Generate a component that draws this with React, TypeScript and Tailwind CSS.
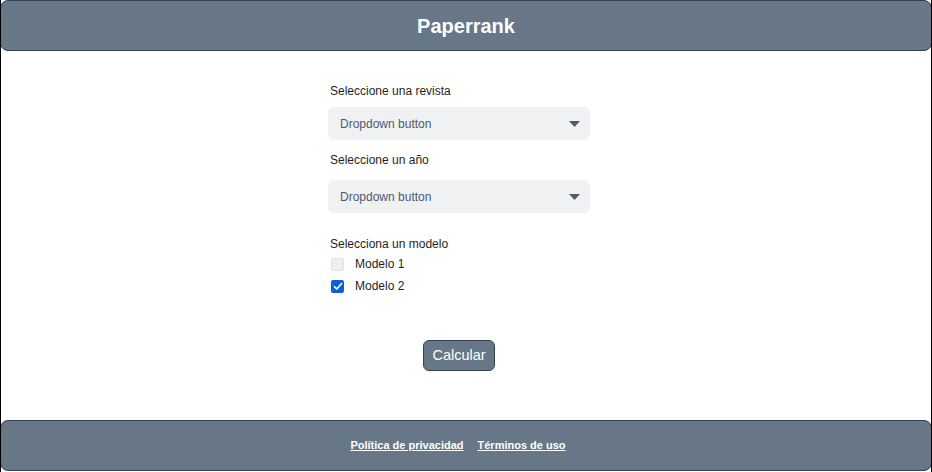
import { useState } from "react";

const MODELS = ["Modelo 1", "Modelo 2"];

function Dropdown({ label, gap }: { label: string; gap: string }) {
  return (
    <div className="flex flex-col">
      <span className="text-[12px] text-[#1f1f1f] px-[2px] h-[18px] leading-[18px]">{label}</span>
      <button className={`${gap} h-[33px] w-full rounded-md bg-[#f0f1f3] flex items-center justify-between pl-[12px] pr-[10px] text-[12px] text-[#4d5a70]`}>
        <span>Dropdown button</span>
        <svg width="11" height="6" viewBox="0 0 11 6" className="fill-[#4d5a70]">
          <path d="M0 0h11L5.5 6z" />
        </svg>
      </button>
    </div>
  );
}

export default function App() {
  const [checked, setChecked] = useState<Record<string, boolean>>({ "Modelo 2": true });

  return (
    <div
      className="h-[472px] w-[932px] flex flex-col bg-white border-x border-black overflow-hidden"
      style={{ fontFamily: '"Liberation Sans", Arial, sans-serif' }}
    >
      {/* Header */}
      <header className="-mx-px h-[51px] flex-shrink-0 flex items-center justify-center rounded-lg border border-[#334155] bg-[#677788]">
        <h1 className="text-[20px] font-bold text-white">Paperrank</h1>
      </header>

      {/* Form */}
      <main className="flex-1 flex flex-col items-center mr-[14px]">
        <div className="w-[262px] pt-[31px] flex flex-col">
          <Dropdown label="Seleccione una revista" gap="mt-[7px]" />
          <div className="h-[11px]" />
          <Dropdown label="Seleccione un año" gap="mt-[11px]" />

          <div className="mt-[22px] flex flex-col">
            <span className="text-[12px] text-[#1f1f1f] px-[2px] h-[18px] leading-[18px]">Selecciona un modelo</span>
            <div className="flex flex-col">
              {MODELS.map((m) => {
                const on = !!checked[m];
                return (
                  <label
                    key={m}
                    className="flex items-center h-[22px] cursor-pointer"
                    onClick={() => setChecked({ ...checked, [m]: !on })}
                  >
                    <span
                      className={`ml-[3px] w-[13px] h-[13px] rounded-[2px] flex items-center justify-center ${
                        on ? "bg-[#0b5fd8]" : "bg-[#eef0f3] border border-[#dde1e6]"
                      }`}
                    >
                      {on && (
                        <svg width="10" height="8" viewBox="0 0 10 8" fill="none">
                          <path d="M1 4.2L3.8 7 9 1" stroke="white" strokeWidth="1.6" />
                        </svg>
                      )}
                    </span>
                    <span className="ml-[11px] text-[12px] text-[#1f1f1f]">{m}</span>
                  </label>
                );
              })}
            </div>
          </div>
        </div>

        <button className="mt-[43px] h-[31px] px-[8px] rounded-md border border-[#334155] bg-[#677788] text-[14.5px] text-white">
          Calcular
        </button>
      </main>

      {/* Footer */}
      <footer className="-mx-px mb-px h-[51px] flex-shrink-0 flex items-center justify-center gap-[14px] pr-[16px] rounded-lg border border-[#334155] bg-[#677788]">
        <a className="text-[11px] font-bold text-white underline" href="#">Política de privacidad</a>
        <a className="text-[11px] font-bold text-white underline" href="#">Términos de uso</a>
      </footer>
    </div>
  );
}
